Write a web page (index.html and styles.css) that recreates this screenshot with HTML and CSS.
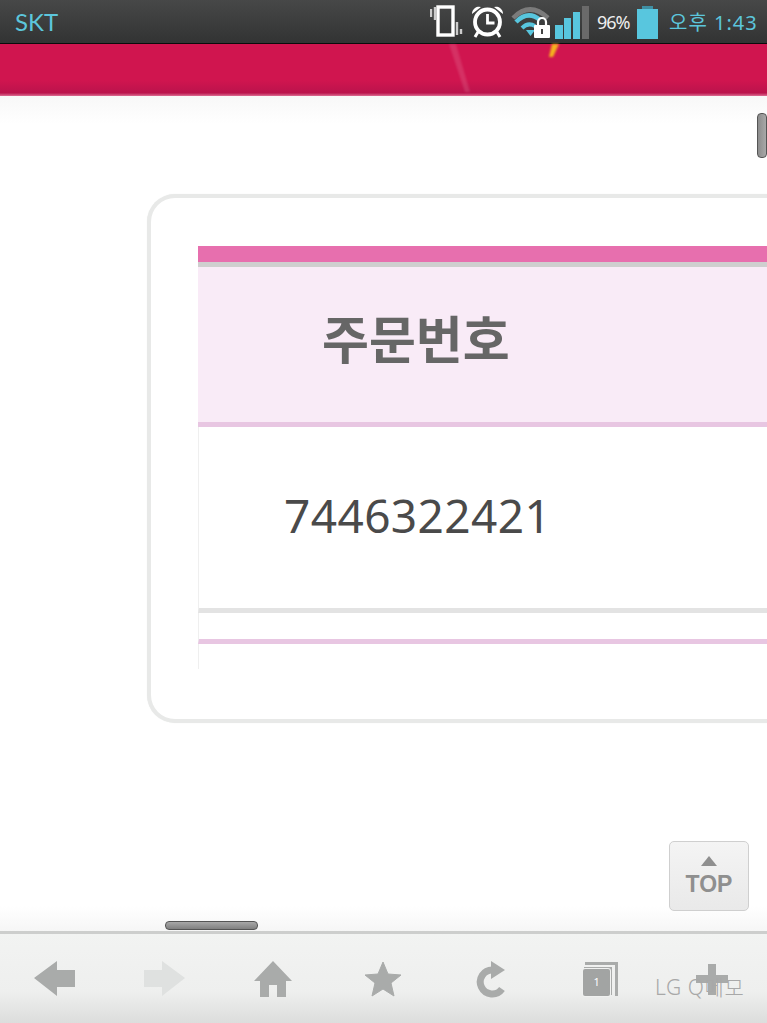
FILE: index.html
```html
<!DOCTYPE html>
<html lang="ko">
<head>
<meta charset="UTF-8" />
<meta name="viewport" content="width=device-width, initial-scale=1" />
<title>주문번호</title>
<link rel="stylesheet" href="styles.css">
</head>
<body>
  <div class="phone">
    <div class="status-bar">
      <span class="carrier">SKT</span>
      <div class="status-icons">
        <svg class="ic-vibrate" width="33" height="33" viewBox="0 0 33 33">
          <rect x="8" y="2" width="15" height="28" fill="none" stroke="#fff" stroke-width="3.4"/>
          <path d="M1 4v8M5 2v13M27 17v13M31 24v5" stroke="#ccc" stroke-width="2.4" fill="none"/>
        </svg>
        <svg class="ic-alarm" width="33" height="33" viewBox="0 0 33 33">
          <circle cx="16.500" cy="17" r="12.500" fill="none" stroke="#fff" stroke-width="3.8"/>
          <path d="M16.500 9v9h7" fill="none" stroke="#fff" stroke-width="2.800"/>
          <path d="M1 9a7 7 0 0 1 9-7zM32 9a7 7 0 0 0-9-7z" fill="#fff"/>
          <path d="M7 27l-3 5M26 27l3 5" stroke="#fff" stroke-width="3"/>
        </svg>
        <svg class="ic-wifi" width="39" height="31" viewBox="0 0 39 31">
          <path d="M2 11Q19-6 37 11" fill="none" stroke="#7b7b7b" stroke-width="4.500"/>
          <path d="M5 15Q17 3 29 13" fill="none" stroke="#58c6de" stroke-width="4.500"/>
          <path d="M11 21Q17 15 24 19" fill="none" stroke="#58c6de" stroke-width="4"/>
          <path d="M15 23h9l-4.500 6z" fill="#58c6de"/>
          <rect x="23" y="18" width="16" height="13" rx="1" fill="#fff"/>
          <path d="M27 18v-3a4 4 0 0 1 8 0v3" fill="none" stroke="#fff" stroke-width="2.200"/>
          <rect x="30" y="22" width="2" height="5" fill="#444"/>
        </svg>
        <svg class="ic-signal" width="34" height="33" viewBox="0 0 34 33">
          <rect x="0" y="19" width="8" height="14" fill="#58c6de"/>
          <rect x="9" y="12" width="7" height="21" fill="#58c6de"/>
          <rect x="18" y="6" width="7" height="27" fill="#58c6de"/>
          <rect x="27" y="0" width="7" height="33" fill="#6a6a6a"/>
        </svg>
        <span class="battery-pct">96%</span>
        <svg class="ic-battery" width="21" height="33" viewBox="0 0 21 33">
          <rect x="5" y="0" width="11" height="3" fill="#3f8fa3"/>
          <rect x="0" y="3" width="21" height="30" fill="#58c6de"/>
        </svg>
        <span class="clock">오후 1:43</span>
      </div>
    </div>

    <header class="site-header">
      <svg class="header-glints" width="767" height="52" viewBox="0 0 767 52">
        <path d="M449 0l7 0 14 48-5 0z" fill="#fff" opacity=".12"/>
        <path d="M552 0h7l-6 13h-4z" fill="#f5b31e"/>
      </svg>
    </header>

    <main class="page">
      <div class="card">
        <div class="order-table">
          <div class="table-top"></div>
          <div class="table-head">
            <span class="head-label">주문번호</span>
          </div>
          <div class="table-cell">
            <span class="order-no">7446322421</span>
          </div>
          <div class="table-gap"></div>
          <div class="table-foot"></div>
        </div>
      </div>
    </main>

    <nav class="toolbar">
      <svg class="tool" width="44" height="40" viewBox="0 0 44 40">
        <path d="M1 19L24 2v9h18v17H24v9z" fill="#a9abaa"/>
      </svg>
      <svg class="tool" width="44" height="40" viewBox="0 0 44 40">
        <path d="M43 19L20 2v9H2v17h18v9z" fill="#dfe1e0"/>
      </svg>
      <svg class="tool tool-home" width="40" height="38" viewBox="0 0 40 38">
        <path d="M20 1L39 21H33V37H24V25H16V37H7V21H1z" fill="#a9abaa"/>
      </svg>
      <svg class="tool" width="38" height="36" viewBox="0 0 38 36">
        <path d="M19 1l5 12 13 1-10 8 3 13-11-7-11 7 3-13L1 14l13-1z" fill="#a9abaa" stroke="#a9abaa" stroke-linejoin="round"/>
      </svg>
      <svg class="tool" width="34" height="38" viewBox="0 0 34 38">
        <path d="M26 29A12 12 0 1 1 17 10" fill="none" stroke="#a9abaa" stroke-width="7"/>
        <path d="M15 1l14 9-14 9z" fill="#a9abaa"/>
      </svg>
      <div class="tabs-icon">
        <span class="tabs-count">1</span>
      </div>
      <svg class="tool" width="34" height="34" viewBox="0 0 34 34">
        <path d="M13 2h8v11h12v8H21v12h-8V21H1v-8h12z" fill="#a9abaa"/>
      </svg>
    </nav>

    <div class="scroll-v"></div>
    <div class="scroll-h"></div>
    <button class="top-btn"><span class="top-arrow"></span>TOP</button>
    <span class="memo-mark">LG Q메모</span>
  </div>
</body>
</html>
```
FILE: styles.css
```css
html, body {
  margin: 0; padding: 0; height: 100%;
  background: #fff;
  font-family: "Noto Sans", "Noto Sans CJK KR", sans-serif;
  overflow: hidden;
}
.phone {
  position: relative;
  display: flex;
  flex-direction: column;
  width: 767px;
  height: 1023px;
  overflow: hidden;
}

/* status bar */
.status-bar {
  display: flex;
  justify-content: space-between;
  align-items: center;
  flex: none;
  box-sizing: border-box;
  height: 44px;
  padding: 0 10px 0 15px;
  background: linear-gradient(#474848, #323333);
  border-bottom: 1px solid #0b0b0b;
}
.carrier {
  font-family: Lato, sans-serif;
  font-size: 24px;
  color: #5cc6dc;
}
.status-icons {
  display: flex;
  align-items: center;
  height: 43px;
  color: #5cc6dc;
}
.ic-vibrate { margin-right: 8px; }
.ic-alarm { margin-right: 7px; }
.ic-wifi { margin-right: 5px; margin-top: 2px; }
.ic-signal { margin-right: 8px; margin-top: 2px; }
.battery-pct {
  width: 33px;
  margin-right: 7px;
  font-size: 18px;
  letter-spacing: -1px;
  color: #eee;
}
.ic-battery { margin-top: 2px; margin-right: 11px; }
.clock {
  width: 88px;
  font-size: 20px;
  white-space: nowrap;
  letter-spacing: 1px;
}

/* red header */
.site-header {
  position: relative;
  flex: none;
  height: 52px;
  background: linear-gradient(#d0154f 0, #d0154f 70%, #bb134c 94%, #dc6d92 100%);
}
.header-glints { position: absolute; left: 0; top: 0; filter: blur(1.2px); }

/* page body */
.page {
  flex: 1;
  padding-top: 98px;
  padding-left: 147px;
  background: linear-gradient(#f8f8f8, #fff 28px, #fff 810px, #f6f6f6);
}
.card {
  box-sizing: border-box;
  width: 720px;
  padding: 48px 0 50px 47px;
  background: #fff;
  border: 4px solid #e8e9e8;
  border-right: none;
  border-radius: 28px 0 0 28px;
  box-shadow: 0 0 1px #e8e9e8;
}
.table-top {
  height: 16px;
  background: #e76fae;
  border-bottom: 5px solid #cfcfcf;
}
.table-head {
  display: flex;
  align-items: center;
  box-sizing: border-box;
  height: 160px;
  padding: 0 0 10px 124px;
  background: #f9ebf7;
  border-bottom: 5px solid #e8c6e2;
}
.head-label {
  font-size: 51px;
  font-weight: 700;
  color: #666;
  line-height: 1;
}
.table-cell {
  display: flex;
  align-items: center;
  box-sizing: border-box;
  height: 186px;
  padding: 0 0 5px 85px;
  border-left: 1px solid #efefef;
  border-bottom: 5px solid #e3e3e3;
}
.order-no {
  font-size: 46px;
  letter-spacing: .4px;
  color: #4a4a4a;
  line-height: 1;
}
.table-gap {
  box-sizing: border-box;
  height: 31px;
  border-left: 1px solid #efefef;
  border-bottom: 5px solid #e8c6e2;
}
.table-foot {
  height: 25px;
  border-left: 1px solid #efefef;
}

/* bottom toolbar */
.toolbar {
  display: grid;
  grid-template-columns: repeat(7, 1fr);
  align-items: center;
  justify-items: center;
  flex: none;
  box-sizing: border-box;
  height: 92px;
  background: linear-gradient(#f2f3f2, #eeefee 65%, #dcdddc);
  border-top: 3px solid #cdcecd;
}
.tool-home { margin-right: 2px; }
.tabs-icon {
  position: relative;
  box-sizing: border-box;
  width: 33px;
  height: 34px;
  margin-right: 2px;
  border-top: 3px solid #a9abaa;
  border-right: 3px solid #a9abaa;
}
.tabs-icon::before {
  content: "";
  position: absolute;
  left: -1px;
  top: 2px;
  width: 26px;
  height: 26px;
  border-top: 2px solid #a9abaa;
  border-right: 2px solid #a9abaa;
}
.tabs-count {
  position: absolute;
  left: -2px;
  top: 4px;
  width: 27px;
  height: 27px;
  background: #a2a4a3;
  border-radius: 2px;
  box-shadow: 0 0 0 1px #f0f1f0;
  color: #fff;
  font-size: 11px;
  line-height: 26px;
  text-align: center;
}

/* overlays */
.scroll-v {
  position: absolute;
  right: 0;
  top: 113px;
  width: 8px;
  height: 43px;
  background: linear-gradient(90deg, #8c8c8c, #a8a8a8);
  border: 1px solid #555;
  border-radius: 4px;
}
.scroll-h {
  position: absolute;
  left: 165px;
  top: 921px;
  width: 91px;
  height: 7px;
  background: linear-gradient(#a8a8a8, #808080);
  border: 1px solid #555;
  border-radius: 4px;
}
.top-btn {
  position: absolute;
  left: 669px;
  top: 841px;
  display: flex;
  flex-direction: column;
  align-items: center;
  box-sizing: border-box;
  width: 80px;
  height: 70px;
  padding: 14px 0 0;
  background: linear-gradient(#f4f4f4, #e9e9e9);
  border: 1px solid #cfcfcf;
  border-radius: 5px;
  color: #8f8f8f;
  font-family: "Liberation Sans", sans-serif;
  font-size: 23px;
  font-weight: 700;
  line-height: 24px;
}
.top-arrow {
  width: 0;
  height: 0;
  margin-bottom: 6px;
  border-left: 8px solid transparent;
  border-right: 8px solid transparent;
  border-bottom: 10px solid #8f8f8f;
}
.memo-mark {
  position: absolute;
  left: 655px;
  top: 971px;
  font-size: 21px;
  letter-spacing: .6px;
  color: #a8a8a8;
  white-space: nowrap;
  font-weight: 300;
}
```
